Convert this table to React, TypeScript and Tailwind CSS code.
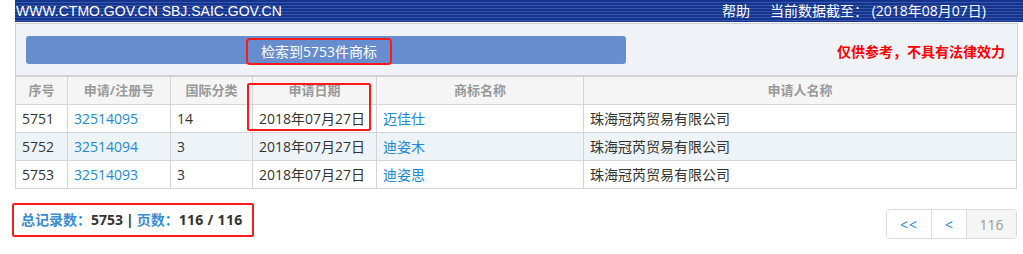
const rows = [
  { no: "5751", reg: "32514095", cls: "14", date: "2018年07月27日", name: "迈佳仕", owner: "珠海冠芮贸易有限公司" },
  { no: "5752", reg: "32514094", cls: "3", date: "2018年07月27日", name: "迪姿木", owner: "珠海冠芮贸易有限公司" },
  { no: "5753", reg: "32514093", cls: "3", date: "2018年07月27日", name: "迪姿思", owner: "珠海冠芮贸易有限公司" },
];

const cols = ["w-[52px]", "w-[103px]", "w-[82px]", "w-[124px]", "w-[207px]", ""];
const heads = ["序号", "申请/注册号", "国际分类", "申请日期", "商标名称", "申请人名称"];

const font = "font-['Open_Sans','Noto_Sans_CJK_SC',sans-serif]";

export default function App() {
  return (
    <div className={`relative h-[254px] w-[1023px] bg-white text-[14px] text-[#333] ${font}`}>
      {/* top banner */}
      <div className="ml-[15px] flex h-[22px] items-center justify-between bg-[repeating-linear-gradient(to_bottom,#14338c_0px,#14338c_2px,#3556ad_2px,#3556ad_3px)] pl-[1px] pr-[37px] text-white">
        <span className="font-['Liberation_Sans',sans-serif] text-[14px] leading-none">
          WWW.CTMO.GOV.CN SBJ.SAIC.GOV.CN
        </span>
        <div className="flex gap-[20px] text-[14px] leading-none">
          <span>帮助</span>
          <span>当前数据截至： (2018年08月07日)</span>
        </div>
      </div>

      {/* search summary */}
      <div className="mx-[15px] mt-[1px] flex h-[53px] w-[1003px] items-center border border-[#cfcfcf] bg-[#eff3f8] pl-[10px] pr-[12px]">
        <div className="flex h-[28px] w-[600px] items-center justify-center rounded-[3px] bg-[#688dcf]">
          <span className="-translate-x-[7px] translate-y-[2px] rounded-[2px] px-[13px] py-[1px] text-[14px] leading-[21px] text-white outline-2 outline-[#ff1a1a]">
            检索到5753件商标
          </span>
        </div>
        <div className="ml-auto pt-[4px] text-[14px] font-bold text-[#ff0000]">仅供参考，不具有法律效力</div>
      </div>

      {/* result table */}
      <div className="relative">
        <table className="ml-[15px] w-[1002px] border-collapse">
          <thead>
            <tr className="h-[28px] bg-[#f5f5f5] text-[13px] font-bold text-[#999]">
              {heads.map((h, i) => (
                <th key={h} className={`border border-[#d4d4d4] px-[6px] py-0 text-center font-bold ${cols[i]}`}>
                  {h}
                </th>
              ))}
            </tr>
          </thead>
          <tbody>
            {rows.map((r, i) => (
              <tr key={r.no} className={`h-[28px] ${i === 1 ? "bg-[#eef3f8]" : "bg-white"}`}>
                <td className="border border-[#d4d4d4] px-[6px] py-0">{r.no}</td>
                <td className="border border-[#d4d4d4] px-[6px] py-0 text-[#1a8ad4]">{r.reg}</td>
                <td className="border border-[#d4d4d4] px-[6px] py-0">{r.cls}</td>
                <td className="whitespace-nowrap border border-[#d4d4d4] px-[6px] py-0">{r.date}</td>
                <td className="border border-[#d4d4d4] px-[6px] py-0 text-[#1a8ad4]">{r.name}</td>
                <td className="border border-[#d4d4d4] px-[6px] py-0">{r.owner}</td>
              </tr>
            ))}
          </tbody>
        </table>
        {/* highlight around the filing date column */}
        <div className="pointer-events-none absolute left-[247px] top-[7px] h-[48px] w-[124px] rounded-[2px] border-2 border-[#ff1a1a]" />
      </div>

      {/* footer: totals + pager */}
      <div className="mt-[14px] flex items-start justify-between pl-[12px] pr-[6px]">
        <div className="rounded-[2px] border-2 border-[#ff1a1a] py-[5px] pl-[7px] pr-[9px] text-[14px] font-bold leading-[20px]">
          <span className="text-[#3a8ad4]">总记录数：</span>
          <span className="text-[#333]">5753</span>
          <span className="mx-[3px] text-[#333]">|</span>
          <span className="text-[#3a8ad4]">页数：</span>
          <span className="tracking-[0.3px] text-[#333]">116 / 116</span>
        </div>
        <div className="mt-[6px] flex h-[30px] overflow-hidden rounded-[4px] border border-[#ddd] text-[14px]">
          <span className="flex w-[45px] items-center justify-center border-r border-[#ddd] tracking-[1px] text-[#1a8ad4]">&lt;&lt;</span>
          <span className="flex w-[35px] items-center justify-center border-r border-[#ddd] text-[#1a8ad4]">&lt;</span>
          <span className="flex w-[49px] items-center justify-center bg-[#f5f5f5] text-[#999]">116</span>
        </div>
      </div>
    </div>
  );
}
